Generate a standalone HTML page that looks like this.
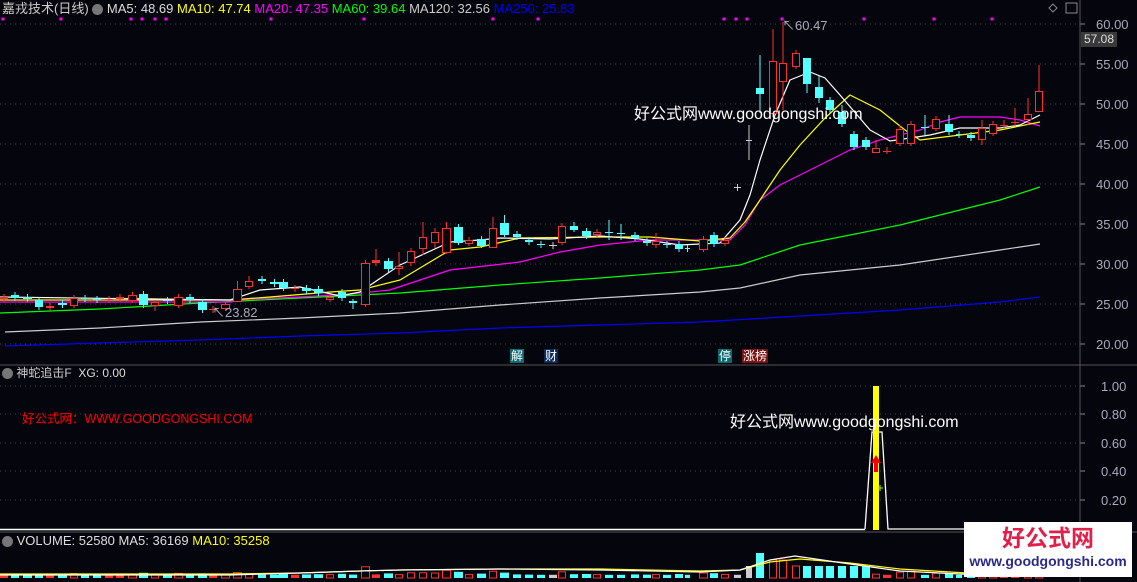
<!DOCTYPE html>
<html><head><meta charset="utf-8"><style>
body{margin:0;background:#05050d;width:1137px;height:582px;overflow:hidden;font-family:"Liberation Sans","Noto Sans CJK SC",sans-serif}
svg{position:absolute;left:0;top:0}
.t{position:absolute;white-space:nowrap;font-size:12px;line-height:14px}
</style></head><body>
<svg id="s" width="1137" height="582" xmlns="http://www.w3.org/2000/svg"></svg>
<div class="t" style="left:2px;top:1px;color:#ccc;font-size:13px;line-height:16px">嘉戎技术(日线) <span style="display:inline-block;width:11px;height:11px;border-radius:6px;background:#777;vertical-align:-2px"></span> <span style="color:#ddd">MA5: 48.69</span> <span style="color:#ff0">MA10: 47.74</span> <span style="color:#f0f">MA20: 47.35</span> <span style="color:#0f0">MA60: 39.64</span> <span style="color:#ccc">MA120: 32.56</span> <span style="color:#00f">MA250: 25.83</span></div>
<div class="t" style="left:2px;top:366px;color:#ccc"><span style="display:inline-block;width:11px;height:11px;border-radius:6px;background:#777;vertical-align:-2px"></span> 神蛇追击F&nbsp; <span style="color:#ddd">XG: 0.00</span></div>
<div class="t" style="left:2px;top:534px;color:#ccc;font-size:13px"><span style="display:inline-block;width:11px;height:11px;border-radius:6px;background:#777;vertical-align:-2px"></span> <span style="color:#ddd">VOLUME: 52580 MA5: 36169</span> <span style="color:#ff0">MA10: 35258</span></div>
<div class="t" style="left:22px;top:412px;color:#f00;font-size:12.5px">好公式网：WWW.GOODGONGSHI.COM</div>
<div class="t" style="left:634px;top:106px;color:#fff;font-size:16px;line-height:18px">好公式网www.goodgongshi.com</div>
<div class="t" style="left:730px;top:414px;color:#fff;font-size:16px;line-height:18px">好公式网www.goodgongshi.com</div>
<div class="t" style="left:212px;top:306px;color:#aab;font-size:13px">↖23.82</div>
<div class="t" style="left:782px;top:19px;color:#aab;font-size:13px">↖60.47</div>
<div class="t" style="left:510px;top:349px;color:#fff;background:#0a6a70;padding:0 1px">解</div>
<div class="t" style="left:544px;top:349px;color:#fff;background:#0a2a5a;padding:0 1px">财</div>
<div class="t" style="left:718px;top:349px;color:#fff;background:#0a6a70;padding:0 1px">停</div>
<div class="t" style="left:742px;top:349px;color:#fff;background:#7a1010;padding:0 1px">涨榜</div>
<div class="t" style="left:1081px;top:32px;width:36px;height:15px;background:#3a3a3a;color:#ddd;font-size:12px;line-height:15px;text-align:center">57.08</div>
<div style="position:absolute;left:964px;top:522px;width:168px;height:55px;background:#fff;text-align:center">
<div style="color:#e0204a;font-weight:bold;font-size:23px;line-height:28px;margin-top:2px">好公式网</div>
<div style="color:#2a2a8a;font-weight:bold;font-size:14px;line-height:18px">www.goodgongshi.com</div></div>
<script>
var s=document.getElementById('s'),h='';
function L(x1,y1,x2,y2,c,w,d){h+='<line x1="'+x1+'" y1="'+y1+'" x2="'+x2+'" y2="'+y2+'" stroke="'+c+'" stroke-width="'+(w||1)+'"'+(d?' stroke-dasharray="'+d+'"':'')+'/>';}
function P(pts,c){h+='<polyline fill="none" stroke="'+c+'" stroke-width="1.2" stroke-linejoin="round" points="'+pts+'"/>';}
function T(x,y,t,c){h+='<text x="'+x+'" y="'+y+'" fill="'+(c||'#aab')+'" font-size="13" font-family="Liberation Sans">'+t+'</text>';}
for(var p=60;p>=20;p-=5){var y=24+(60-p)*8;L(0,y,1080,y,'#444',1,'1 4');T(1096,y+5,p.toFixed(2));L(1080,y,1085,y,'#888');}
[386,414,443,471,500].forEach(function(y,i){L(0,y,1080,y,'#444',1,'1 4');T(1101,y+5,(1-i*0.2).toFixed(2));L(1080,y,1085,y,'#888');});
L(0,365,1137,365,'#555');L(0,532,1137,532,'#555');L(1080,0,1080,582,'#555');
L(0,529.5,865,529.5,'#fff',1.5);
[3,61,131,142,155,166,271,364,493,538,724,736,747,782,864,934,992].forEach(function(x){h+='<rect x="'+(x-1.5)+'" y="17.5" width="3" height="3" fill="#f0f"/>';});
P('5,346 100,343 200,340 300,336 400,333 500,328 600,325 700,322 800,316 900,310 1000,302 1040,297','#0000ff');
P('5,332 100,328 200,322 300,318 400,313 500,305 600,298 700,292 740,288 800,275 900,265 1000,250 1040,244','#ccc');
P('0,313 100,309 200,303 300,298 400,293 500,285 600,278 700,270 740,265 800,245 900,225 1000,200 1040,187','#0f0');
P('0,302 230,302 250,299 300,297 350,294 390,290 420,280 450,270 520,262 560,252 600,245 650,240 730,240 745,225 760,200 780,185 800,175 850,150 880,140 920,130 940,122 960,117 1000,117 1020,120 1040,126','#f0f');
P('0,300 230,300 270,297 330,292 360,290 400,280 450,250 480,247 520,238 600,237 650,237 700,241 730,238 745,222 760,200 780,170 800,145 825,118 850,95 880,110 905,130 920,140 960,135 1000,130 1040,122','#ff0');
P('0,297 230,300 260,290 300,287 340,296 360,292 400,265 450,242 480,240 500,238 550,239 600,236 640,239 680,245 720,243 740,220 750,195 760,160 775,115 790,80 810,72 825,78 840,95 870,130 890,141 930,135 960,128 1000,128 1020,125 1040,115','#fff');
var C=[[0,8,297,299,'f'],[11,19,295,298,'c'],[23,32,297,299,'c'],[35,43,300,307,'c'],[46,54,306,308,'f'],[58,67,303,305,'c'],[70,78,298,305,'r'],[81,89,298,299,'c'],[93,101,299,300,'c'],[105,113,299,300,'f'],[116,124,297,299,'f'],[128,137,295,300,'r'],[139,148,294,305,'c'],[151,159,302,305,'r',300,311],[163,172,300,301,'c'],[174,183,297,305,'r'],[186,194,297,300,'c'],[198,207,302,310,'c'],[209,217,309,310,'f'],[221,230,304,308,'r'],
[233,242,289,301,'r',281,302],[245,253,281,286,'r',276,289],[258,266,279,281,'c'],[270,279,282,284,'c'],[279,288,282,288,'c'],[291,299,288,289,'f',285,292],[302,311,288,291,'c'],[314,323,289,293,'c'],[326,334,297,299,'r'],[338,346,292,298,'c'],[349,357,301,303,'c',299,309],[361,370,263,304,'r'],
[372,380,260,263,'f',249,266],[384,393,261,269,'c'],[395,403,266,268,'r',252,275],[407,415,251,262,'r',248,266],[419,427,237,248,'r',222,255],[431,439,232,242,'r',228,248],[442,451,228,252,'r',222,254],[454,463,227,243,'c',224,245],[465,473,240,243,'r'],[477,486,239,246,'c',236,248],[489,497,228,247,'r',217,248],[500,509,223,235,'c',215,237],[513,521,234,237,'c'],[525,533,240,242,'c'],[537,545,244,245,'c'],[549,557,245,246,'g'],[558,566,226,242,'r'],[570,578,226,230,'c',222,232],[582,591,231,236,'c'],[593,601,232,234,'r'],[605,613,232,233,'c',220,240],[617,625,233,234,'c',224,240],[631,639,235,238,'c'],[643,651,241,243,'c'],[652,660,241,244,'r',233,248],[663,671,244,245,'c'],[675,683,244,249,'c'],[685,690,248,249,'c'],[699,708,239,249,'r'],[710,718,235,244,'c'],[721,729,240,243,'r'],
[734,741,187,188,'g'],[746,752,140,141,'g',125,160],[756,764,88,94,'c',55,113],[769,777,61,113,'r',29,113],[779,787,63,81,'r',22,110],[792,800,53,66,'r'],[803,811,58,84,'c',58,93],[815,823,87,98,'c',76,103],[826,834,100,110,'c'],[838,846,112,124,'c',105,127],[850,858,134,147,'c'],[862,870,140,147,'c'],[872,880,148,152,'r',140,153],[883,891,151,152,'f',147,154],[896,904,129,143,'r',125,146],[907,915,124,143,'r'],[921,929,127,128,'c',115,135],[932,940,119,128,'r'],[945,953,124,132,'c',115,135],[956,962,134,135,'c'],[967,975,135,138,'c'],[978,986,128,139,'r',120,145],[989,997,124,133,'r'],[1000,1008,125,126,'f',120,128],[1011,1019,122,123,'f',108,126],[1024,1032,114,119,'r',98,125],[1035,1043,91,111,'r',65,111]];
C.forEach(function(c){var col=c[4]=='c'?'#54ffff':(c[4]=='g'?'#ccc':'#ff3030');var m=(c[0]+c[1])/2;var wt=c[5]||c[2]-3,wb=c[6]||c[3]+3;L(m,wt,m,wb,col);
var hh=Math.max(1,c[3]-c[2]);
if(c[4]=='r')h+='<rect x="'+(c[0]+.5)+'" y="'+(c[2]+.5)+'" width="'+(c[1]-c[0]-1)+'" height="'+hh+'" fill="#05050d" stroke="'+col+'"/>';
else h+='<rect x="'+c[0]+'" y="'+c[2]+'" width="'+(c[1]-c[0])+'" height="'+hh+'" fill="'+col+'"/>';
var vh=Math.min(12,3+(c[3]-c[2])*0.2);if(c[0]>740&&c[0]<870)vh=Math.max(vh,12);if(c[0]==756)vh=25;if(c[0]==769||c[0]==779)vh=18;
var vy=578-vh;if(c[4]=='r')h+='<rect x="'+(c[0]+.5)+'" y="'+vy+'" width="'+(c[1]-c[0]-1)+'" height="'+vh+'" fill="none" stroke="#ff3030"/>';else h+='<rect x="'+c[0]+'" y="'+vy+'" width="'+(c[1]-c[0])+'" height="'+vh+'" fill="'+col+'"/>';});
P('0,574 230,574 300,573 360,571 400,570 500,569 600,569 700,571 740,570 770,562 800,559 850,563 900,569 1000,575 1040,575','#ff0');
P('0,575 230,575 300,573 360,571 400,570 500,569 600,570 700,572 740,570 770,560 795,556 850,564 900,571 1000,576 1040,576','#fff');
h+='<polyline fill="none" stroke="#fff" stroke-width="1.3" points="865,529 872,432 882,432 888,529 1080,529"/>';
h+='<rect x="873" y="386" width="6" height="144" fill="#ff0"/>';
h+='<polygon points="876,455 871,463 874,463 874,472 878,472 878,463 881,463" fill="#f00"/>';
L(877,488,883,488,'#8f0');L(880,485,880,491,'#8f0');
h+='<polygon points="1053,4 1057,8 1053,12 1049,8" fill="none" stroke="#888"/><rect x="1066" y="3" width="11" height="10" fill="none" stroke="#888"/>';
s.innerHTML=h;
</script>
</body></html>
